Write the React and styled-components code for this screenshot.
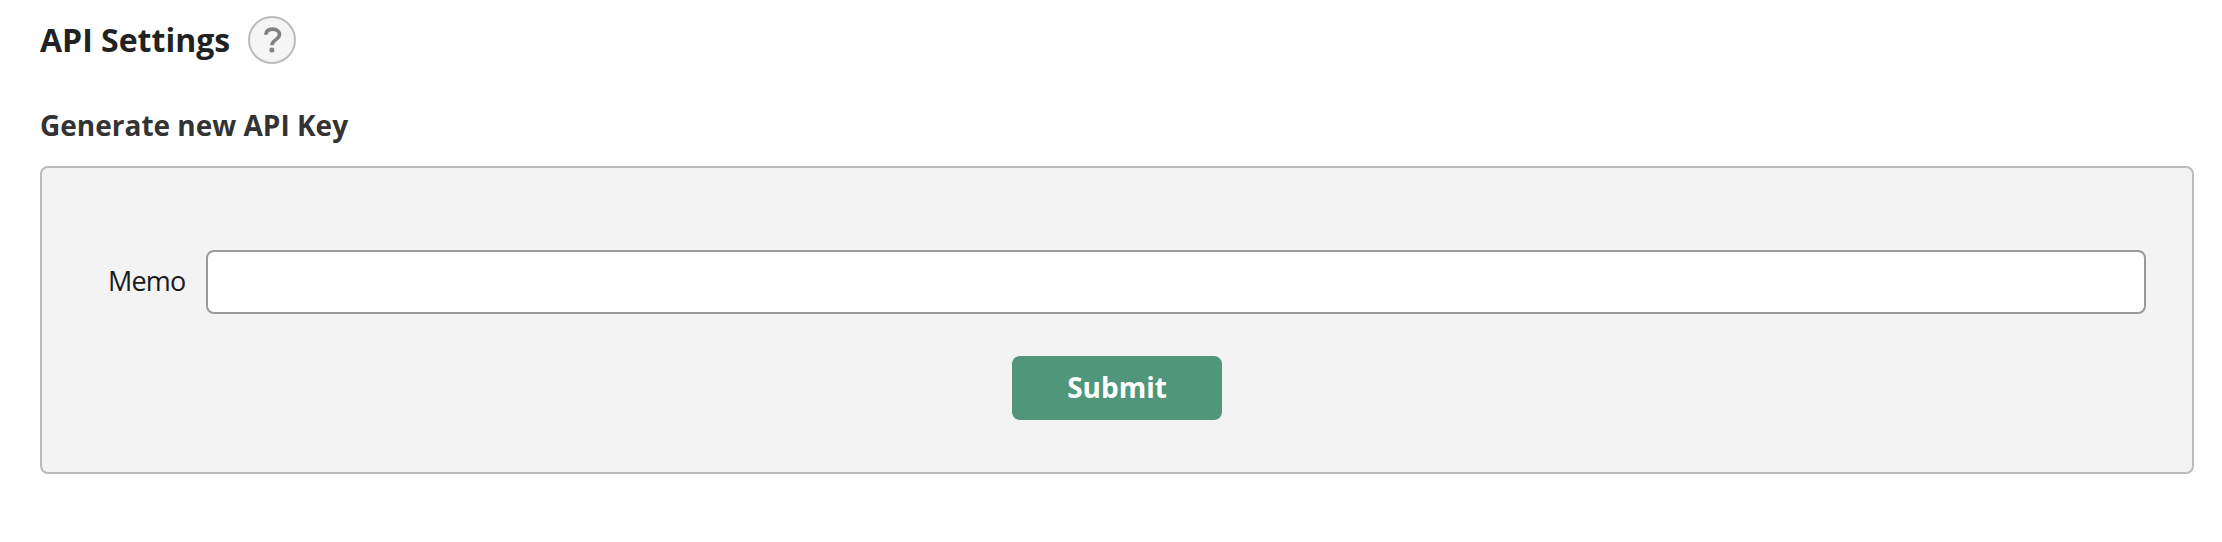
import React from "react";
import styled, { createGlobalStyle } from "styled-components";

const Global = createGlobalStyle`
  * { box-sizing: border-box; }
  body { margin: 0; background: #fff; font-family: "Open Sans", sans-serif; color: #222; }
`;
const Page = styled.main`
  padding: 16px 28px 0 40px;
`;
const Header = styled.header`
  display: flex;
  align-items: center;
  gap: 18px;
  height: 48px;
`;
const Title = styled.h1`
  margin: 0;
  font-size: 32px;
  line-height: 48px;
  font-weight: 700;
`;
const Help = styled.button`
  display: flex;
  width: 48px;
  height: 48px;
  padding: 0;
  border: 2px solid #bbb;
  border-radius: 50%;
  background: #f5f5f5;
  color: #808080;
`;
const Subtitle = styled.h2`
  margin: 41px 0 21px;
  font-size: 28px;
  line-height: 40px;
  font-weight: 700;
  color: #333;
`;
const Panel = styled.form`
  height: 308px;
  padding-top: 82px;
  border: 2px solid #bbb;
  border-radius: 8px;
  background: #f3f3f3;
`;
const Field = styled.label`
  display: flex;
  align-items: center;
  padding: 0 46px 0 66px;
`;
const FieldName = styled.span`
  width: 98px;
  padding-bottom: 4px;
  font-size: 27px;
  letter-spacing: -0.8px;
  color: #1a1a1a;
`;
const Input = styled.input`
  flex: 1;
  min-width: 0;
  height: 64px;
  border: 2px solid #999;
  border-radius: 8px;
  background: #fff;
`;
const Submit = styled.button`
  display: block;
  width: 210px;
  height: 64px;
  margin: 42px auto 0;
  padding: 0 0 2px;
  border: 0;
  border-radius: 8px;
  background: #4f967b;
  color: #fff;
  font: 700 28px/62px "Open Sans", sans-serif;
`;

function QuestionIcon() {
  return (
    <svg width="44" height="44" viewBox="0 0 44 44" fill="none" aria-hidden="true">
      <path
        d="M15.7 16.8C16.1 13.1 18.8 11.1 22.6 11.1c4 0 6.9 2.1 6.9 5.5 0 5.2-7.6 4.9-7.6 10.7"
        stroke="currentColor"
        strokeWidth="3.6"
      />
      <circle cx="21.9" cy="32.1" r="2.5" fill="currentColor" />
    </svg>
  );
}

export default function App() {
  return (
    <Page>
      <Global />
      <Header>
        <Title>API Settings</Title>
        <Help type="button" aria-label="Help">
          <QuestionIcon />
        </Help>
      </Header>
      <Subtitle>Generate new API Key</Subtitle>
      <Panel>
        <Field>
          <FieldName>Memo</FieldName>
          <Input />
        </Field>
        <Submit type="button">Submit</Submit>
      </Panel>
    </Page>
  );
}
